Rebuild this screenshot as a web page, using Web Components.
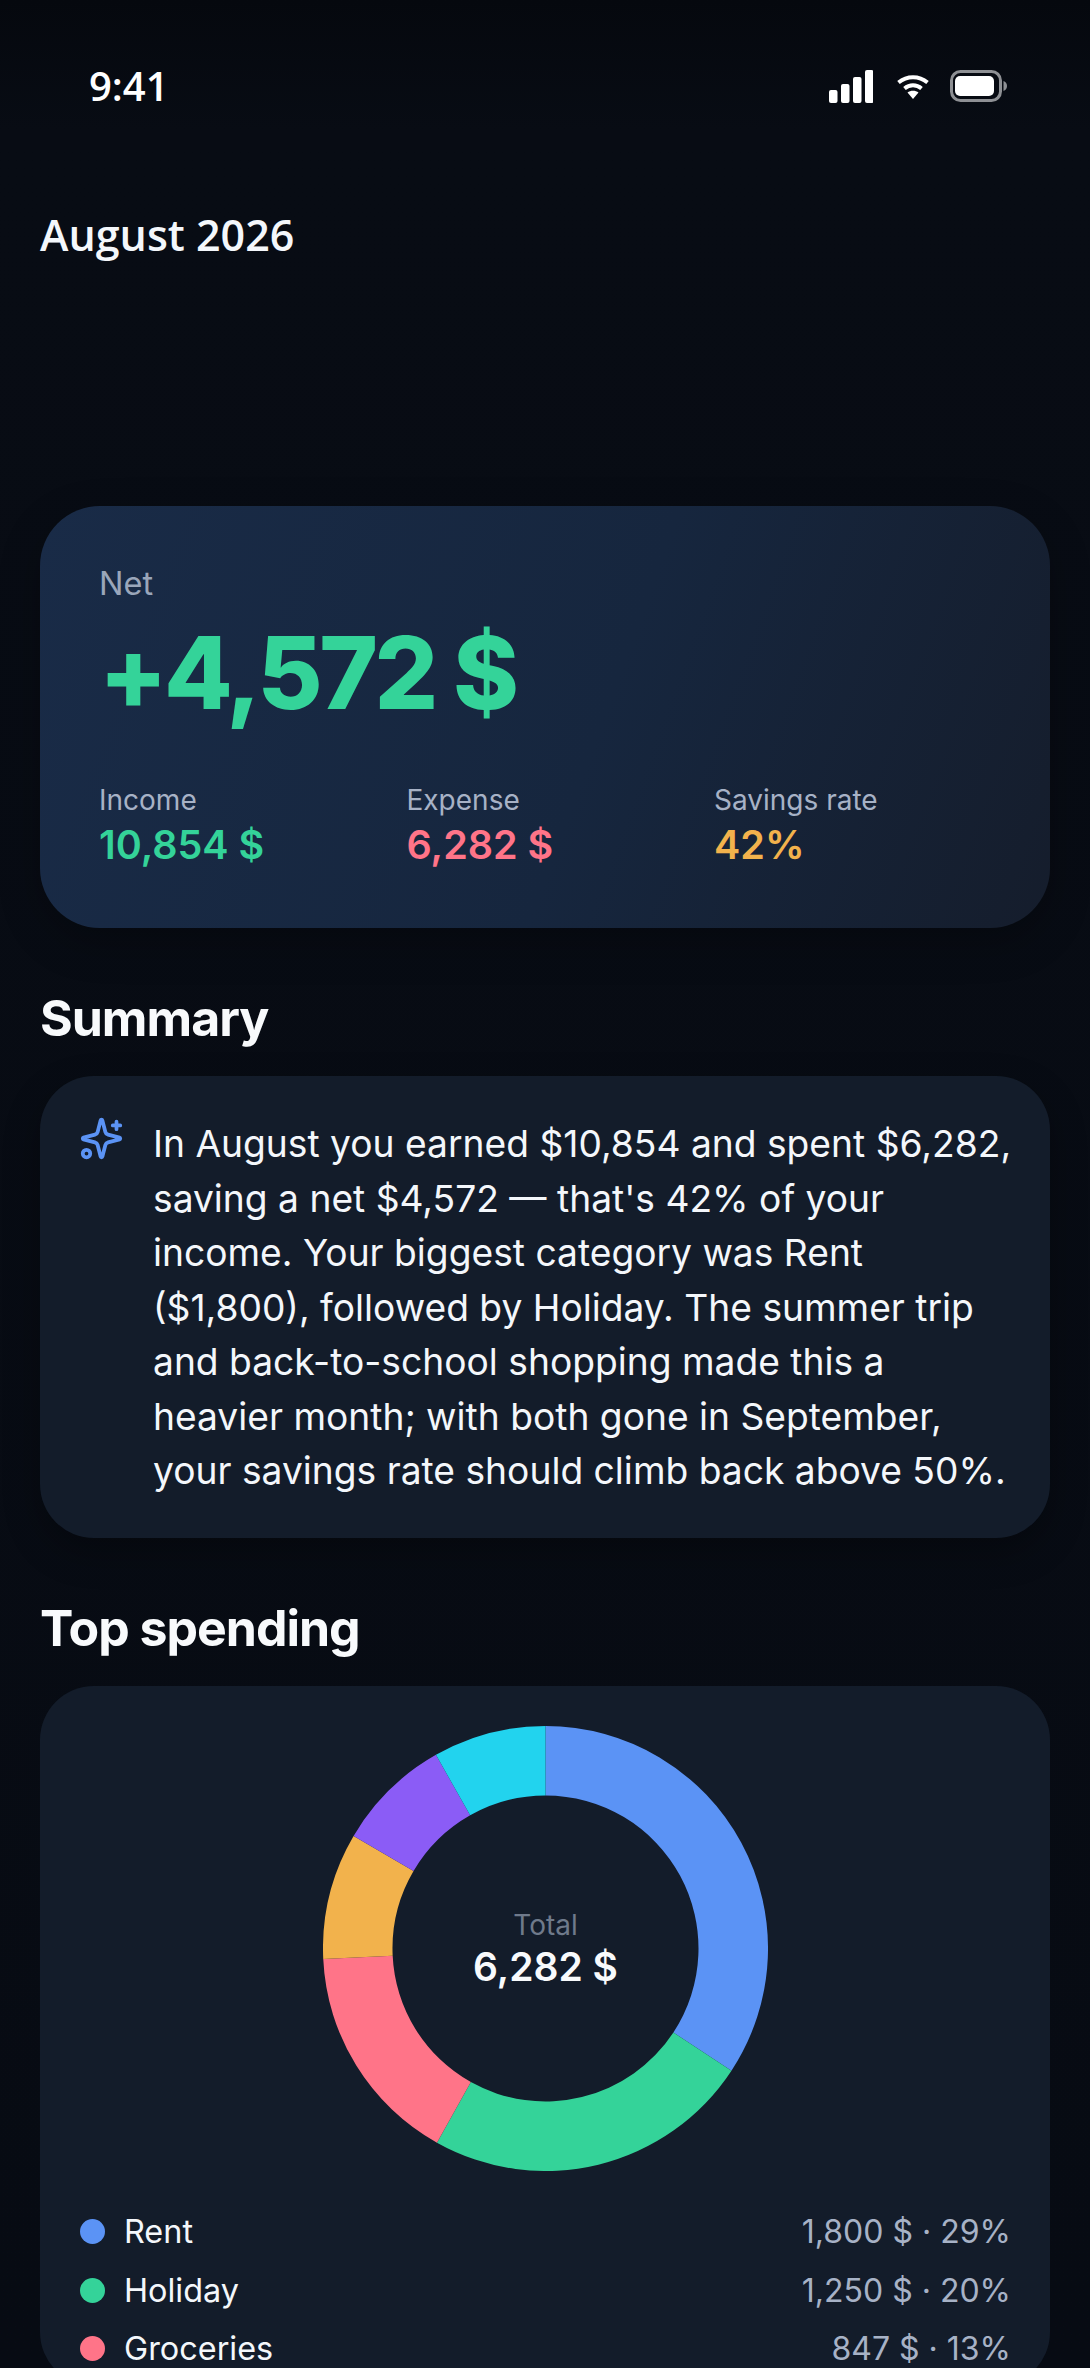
<!DOCTYPE html>
<html lang="en"><head><meta charset="utf-8"><title>August 2026</title>
<style>
html,body{margin:0;padding:0;height:2368px;overflow:hidden;background:#070b13}
body{font-family:Inter,"Liberation Sans",sans-serif;color:#f4f7fb}
</style></head><body>
<app-screen>
  <status-bar></status-bar>
  <month-title>August 2026</month-title>
  <net-card></net-card>
  <section-title>Summary</section-title>
  <summary-card>In August you earned $10,854 and spent $6,282, saving a net $4,572 — that's 42% of your income. Your biggest category was Rent ($1,800), followed by Holiday. The summer trip and back-to-school shopping made this a heavier month; with both gone in September, your savings rate should climb back above 50%.</summary-card>
  <section-title>Top spending</section-title>
  <spending-card>
    <legend-row color="#5b93f5" name="Rent" value="1,800 $ · 29%"></legend-row>
    <legend-row color="#34d399" name="Holiday" value="1,250 $ · 20%"></legend-row>
    <legend-row color="#ff7488" name="Groceries" value="847 $ · 13%"></legend-row>
  </spending-card>
</app-screen>
<script>
function def(name, css, html){
  customElements.define(name, class extends HTMLElement{
    connectedCallback(){
      if(this.shadowRoot) return;
      const r=this.attachShadow({mode:'open'});
      r.innerHTML='<style>'+css+'</style>'+(typeof html==='function'?html(this):html);
    }
  });
}
def('app-screen',`:host{display:flex;flex-direction:column;height:2368px;overflow:hidden;padding:0 40px;box-sizing:border-box;
  background:linear-gradient(180deg,#05080e 0,#080c14 130px,#070b13 100%)}
  ::slotted(*){flex:none}`,'<slot></slot>');
def('status-bar',`:host{display:flex;justify-content:space-between;align-items:center;height:60px;margin:56px 0 0;padding:0 43px 0 49px;
  font:600 40px/60px "Open Sans",sans-serif;color:#fff}
  .i{display:flex;align-items:center;gap:21px}svg{display:block}.w{margin-left:3px}`,
`<span>9:41</span><span class="i">
<svg width="44" height="33" viewBox="0 0 44 33" fill="#fff"><rect x="0" y="20" width="8.500" height="13" rx="2"/><rect x="12" y="14" width="8.500" height="19" rx="2"/><rect x="24" y="7" width="8.500" height="26" rx="2"/><rect x="36" y="0" width="8.500" height="33" rx="2"/></svg>
<svg class="w" width="32" height="25" viewBox="0 0 32 25" fill="none" stroke="#fff" stroke-width="4"><path d="M1.500 8.500C10 1.500 22 1.500 30.500 8.500"/><path d="M7.500 14.500c5-4.200 12-4.200 17 0"/><path d="M16 25l-5.500-6.500c3-2.500 8-2.500 11 0z" fill="#fff" stroke="none"/></svg>
<svg width="57" height="32" viewBox="0 0 57 32" fill="none"><rect x="1.500" y="1.500" width="49" height="29" rx="9" stroke="#8e9094" stroke-width="3"/><rect x="5" y="6" width="39" height="20" rx="5" fill="#fff"/><path d="M53.500 11v10c2-.5 3.500-2.500 3.500-5s-1.500-4.500-3.500-5z" fill="#8e9094"/></svg>
</span>`);
def('month-title',`:host{display:block;margin-top:91px;font:600 43px/56px "Open Sans",sans-serif;color:#f4f7fb}`,'<slot></slot>');
def('net-card',`:host{display:block;box-sizing:border-box;height:422px;margin-top:243px;padding:58px 59px 0;border-radius:60px;
  background:linear-gradient(110deg,#192b47 0,#16263e 55%,#151d2c 100%);box-shadow:0 14px 40px rgba(0,0,0,.25)}
  .l{font-size:32.500px;line-height:40px;color:#9aa6ba}
  .n{font-size:100px;font-weight:800;line-height:110px;letter-spacing:-3.500px;color:#34d399;margin-top:14px;}
  .g{display:grid;grid-template-columns:repeat(3,307.500px);margin-top:54px}
  .s{font-size:28px;line-height:36px;color:#a7b2c6}
  .v{font-size:39.500px;line-height:50px;font-weight:600;margin-top:2px}`,
`<div class="l">Net</div><div class="n">+4,572 $</div>
<div class="g"><div><div class="s">Income</div><div class="v" style="color:#34d399">10,854 $</div></div>
<div><div class="s">Expense</div><div class="v" style="color:#ff7488">6,282 $</div></div>
<div><div class="s">Savings rate</div><div class="v" style="color:#f2b24c">42%</div></div></div>`);
def('section-title',`:host{display:block;margin-top:60px;font-size:50px;line-height:60px;font-weight:700;letter-spacing:-1px;color:#f8fafc}`,'<slot></slot>');
def('summary-card',`:host{display:flex;gap:29px;box-sizing:border-box;height:462px;margin-top:28px;padding:41px 34px 0 39px;border-radius:54px;background:#131c2a;
  box-shadow:0 14px 36px rgba(0,0,0,.3);font-size:37.200px;line-height:54.500px;color:#f4f7fb}
  svg{flex:none;display:block;margin-top:-1px}`,
`<svg width="45" height="45" viewBox="0 0 24 24" fill="none" stroke="#5b93f5" stroke-width="2" stroke-linecap="round" stroke-linejoin="round"><path d="M9.937 15.500A2 2 0 0 0 8.500 14.063l-6.135-1.582a.500.500 0 0 1 0-.962L8.500 9.936A2 2 0 0 0 9.937 8.500l1.582-6.135a.500.500 0 0 1 .963 0L14.063 8.500A2 2 0 0 0 15.500 9.937l6.135 1.581a.500.500 0 0 1 0 .964L15.500 14.063a2 2 0 0 0-1.437 1.437l-1.582 6.135a.500.500 0 0 1-.963 0z"/><path d="M20 3v4M22 5h-4"/><circle cx="4" cy="20" r="2"/></svg><div><slot></slot></div>`);
function arc(a0,a1,R,r,c){
  const p=(a,q)=>{const t=a*Math.PI/180;return (222.5+q*Math.sin(t)).toFixed(2)+' '+(222.5-q*Math.cos(t)).toFixed(2)};
  const l=a1-a0>180?1:0;
  return `<path fill="${c}" d="M${p(a0,R)}A${R} ${R} 0 ${l} 1 ${p(a1,R)}L${p(a1,r)}A${r} ${r} 0 ${l} 0 ${p(a0,r)}Z"/>`;
}
const segs=[[0,123.3,'#5b93f5'],[123.3,209.2,'#34d399'],[209.2,267.3,'#ff7488'],[267.3,300.4,'#f2b24c'],[300.4,330.5,'#8b5cf6'],[330.5,360,'#22d3ee']];
def('spending-card',`:host{display:block;box-sizing:border-box;margin-top:28px;padding:40px 39px 0 40px;border-radius:54px;background:#131c2a;min-height:700px}
  .d{position:relative;width:445px;height:445px;margin:0 auto}
  svg{display:block}
  .c{position:absolute;inset:0;padding-top:3px;box-sizing:border-box;display:flex;flex-direction:column;align-items:center;justify-content:center}
  .t{font-size:28px;line-height:34px;color:#6f7a8b}
  .a{font-size:39px;line-height:50px;font-weight:600;color:#f8fafc}
  .r{display:flex;flex-direction:column;margin-top:31px}`,
`<div class="d"><svg width="445" height="445" viewBox="0 0 445 445">${segs.map(s=>arc(s[0],s[1],222.500,153,s[2])).join('')}</svg>
<div class="c"><div class="t">Total</div><div class="a">6,282 $</div></div></div><div class="r"><slot></slot></div>`);
def('legend-row',`:host{display:flex;align-items:center;height:58.800px;font-size:32.400px}
  i{width:25px;height:25px;border-radius:50%;flex:none;margin-right:19px}
  b{font-weight:400;color:#f4f7fb;flex:1}
  span{color:#a7b2c6;font-size:32px}`,
e=>`<i style="background:${e.getAttribute('color')}"></i><b>${e.getAttribute('name')}</b><span>${e.getAttribute('value')}</span>`);
</script>
</body></html>
